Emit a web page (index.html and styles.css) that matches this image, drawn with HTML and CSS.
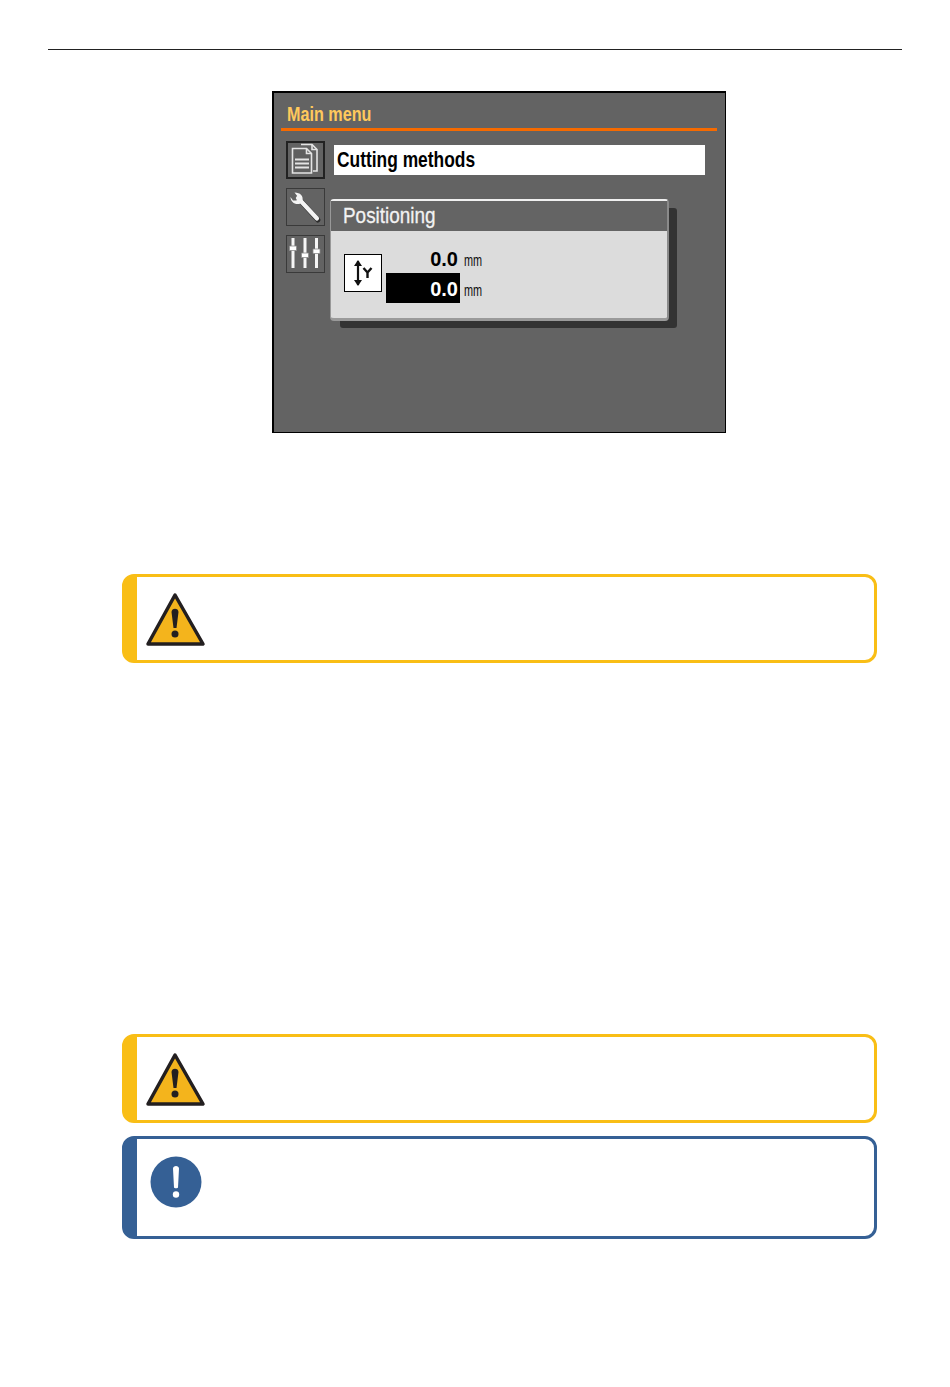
FILE: index.html
```html
<!DOCTYPE html>
<html lang="en">
  <head>
    <meta charset="UTF-8" />
    <title>Main menu - Positioning</title>
    <link rel="stylesheet" href="styles.css">
  </head>
  <body>
    <div class="page-rule"></div>

    <div class="screen">
      <div class="screen-title"><span>Main menu</span></div>
      <div class="screen-line"></div>
      <div class="screen-main">
        <div class="side-icons">
          <div class="side-icon active">
            <svg width="36" height="36" viewBox="0 0 36 36" fill="none" stroke="#e4e4e4" stroke-width="1.6">
              <path d="M14 2.500h11l5 5V29h-4" />
              <path d="M25 2.500v5h5" />
              <path d="M5.500 6.500h14l5 5V31h-19z" fill="#5f5f5f" />
              <path d="M19.500 6.500v5h5" />
              <path d="M8 17.500h14M8 21.500h14M8 25.500h14" stroke-width="2" />
            </svg>
          </div>
          <div class="side-icon">
            <svg width="36" height="36" viewBox="0 0 36 36" fill="none">
              <path d="M12 10L31 31" stroke="#2c2c2c" stroke-width="5" stroke-linecap="round" />
              <path d="M11 9L30 29.500" stroke="#f4f4f4" stroke-width="4.200" stroke-linecap="round" />
              <path d="M3.500 8c0 5 5 8.500 10 6.500l2-2.500c1-5-2-8.500-8-8.500l3.500 4.500-1.500 3.500-3.500 0z" fill="#f4f4f4" />
            </svg>
          </div>
          <div class="side-icon">
            <svg width="36" height="36" viewBox="0 0 36 36" fill="none" stroke="#f6f6f6" stroke-width="3">
              <path d="M6 2v30M18 2v30M29.500 2v30" />
              <path d="M2.500 10h7v4.500h-7zM14.500 17h7v4.500h-7zM26 13h7v4.500h-7z" fill="#fff" stroke="#8c8c8c" stroke-width="0.8" />
            </svg>
          </div>
        </div>
        <div class="menu-field"><span>Cutting methods</span></div>
      </div>

      <div class="dialog">
        <div class="dialog-title"><span>Positioning</span></div>
        <div class="dialog-body">
          <div class="axis-box">
            <svg width="36" height="36" viewBox="0 0 36 36" fill="none" stroke="#111">
              <path d="M13 6v24" stroke-width="2.200" />
              <path d="M9 11L13 5l4 6zM9 25L13 31l4-6z" fill="#111" stroke="none" />
              <path d="M18.500 13l4 4.500 4-4.500M22.500 17.500V23" stroke-width="2.400" />
            </svg>
          </div>
          <div class="values">
            <div class="value-row">
              <span class="value">0.0</span>
              <span class="unit">mm</span>
            </div>
            <div class="value-row">
              <span class="value selected">0.0</span>
              <span class="unit">mm</span>
            </div>
          </div>
        </div>
      </div>
    </div>

    <div class="notes">
      <div class="note warning first">
        <svg class="note-icon" width="62" height="56" viewBox="0 0 62 56">
          <path d="M31 4L59 53H4z" fill="#f4b41c" stroke="#231f20" stroke-width="3.500" stroke-linejoin="round" />
          <path d="M27.500 21c0-4.500 7-4.500 7 0l-2 16h-3z" fill="#231f20" />
          <circle cx="31" cy="43" r="3.500" fill="#231f20" />
        </svg>
      </div>
      <div class="note warning second">
        <svg class="note-icon" width="62" height="56" viewBox="0 0 62 56">
          <path d="M31 4L59 53H4z" fill="#f4b41c" stroke="#231f20" stroke-width="3.500" stroke-linejoin="round" />
          <path d="M27.500 21c0-4.500 7-4.500 7 0l-2 16h-3z" fill="#231f20" />
          <circle cx="31" cy="43" r="3.500" fill="#231f20" />
        </svg>
      </div>
      <div class="note info">
        <svg class="note-icon" width="52" height="52" viewBox="0 0 52 52">
          <circle cx="26" cy="26" r="25.500" fill="#356095" />
          <path d="M23 12.500c0-3.500 6-3.500 6 0l-1 19c0 1-4 1-4 0z" fill="#fff" />
          <circle cx="26" cy="38.500" r="3.200" fill="#fff" />
        </svg>
      </div>
    </div>
  </body>
</html>
```

FILE: styles.css
```css
* {
  box-sizing: border-box;
}

body {
  margin: 0;
  background: #fff;
  font-family: "Liberation Sans", Arial, sans-serif;
}

.page-rule {
  height: 1px;
  margin: 49px 48px 0;
  background: #222;
}

.screen {
  position: relative;
  width: 454px;
  height: 342px;
  margin: 41px 0 0 272px;
  padding: 0 8px 0 7px;
  background: #636363;
  border: 1px solid #000;
  border-top-width: 2px;
  border-left-width: 2px;
}

/* the device font is much narrower than anything installed */
.screen-title span,
.menu-field span,
.dialog-title span,
.unit {
  display: inline-block;
  transform-origin: left center;
}

.screen-title {
  height: 35px;
  padding: 9px 0 0 6px;
  color: #ffc95c;
  font-size: 21px;
  line-height: 24px;
  font-weight: 700;
}

.screen-title span {
  transform: scaleX(0.77);
}

.screen-line {
  height: 3px;
  background: #f66a00;
}

.screen-main {
  display: flex;
  margin-top: 10px;
}

.side-icons {
  display: flex;
  flex-direction: column;
  gap: 9px;
  margin-left: 5px;
}

.side-icon {
  width: 39px;
  height: 38px;
  border: 1px solid #3a3a3a;
}

.side-icon.active {
  border: 2px solid #222;
}

.side-icon.active svg {
  margin: -1px 0 -1px -1px;
}

.menu-field {
  width: 371px;
  height: 30px;
  margin: 4px 0 0 9px;
  padding-left: 3px;
  background: #fff;
  color: #000;
  font-size: 22px;
  line-height: 30px;
  font-weight: 700;
}

.menu-field span {
  transform: scaleX(0.79);
}

.dialog {
  position: absolute;
  left: 56px;
  top: 106px;
  width: 339px;
  height: 122px;
  background: #dcdcdc;
  border: 1px solid #999;
  border-top: 2px solid #f0f0f0;
  border-right: 2px solid #8a8a8a;
  border-bottom: 3px solid #9a9a9a;
  border-radius: 4px;
  box-shadow: 9px 8px 0 -1px #333;
}

.dialog-title {
  height: 30px;
  padding-left: 12px;
  background: #646464;
  color: #f2f2f2;
  font-size: 22px;
  line-height: 29px;
  -webkit-text-stroke: 0.3px #f2f2f2;
}

.dialog-title span {
  transform: scaleX(0.86);
}

.dialog-body {
  display: flex;
  padding: 23px 0 0 13px;
}

.axis-box {
  width: 38px;
  height: 38px;
  background: #fff;
  border: 1px solid #000;
}

.values {
  margin: -11px 0 0 4px;
}

.value-row {
  display: flex;
  align-items: center;
  height: 30px;
}

.value {
  width: 74px;
  height: 30px;
  padding-right: 2px;
  text-align: right;
  color: #000;
  font-size: 20px;
  line-height: 32px;
  font-weight: 700;
}

.value.selected {
  background: #000;
  color: #fff;
}

.unit {
  margin-left: 4px;
  color: #111;
  font-size: 17px;
  padding-top: 5px;
  transform: scaleX(0.64);
}

.notes {
  margin: 141px 73px 0 122px;
}

.note {
  border: 3px solid #f9be16;
  border-left-width: 15px;
  border-radius: 12px;
  height: 89px;
  padding: 14px 0 0 7px;
}

.note-icon {
  display: block;
}

.warning.second {
  margin-top: 371px;
}

.info {
  height: 103px;
  margin-top: 13px;
  padding: 17px 0 0 13px;
  border-color: #356095;
}
```
